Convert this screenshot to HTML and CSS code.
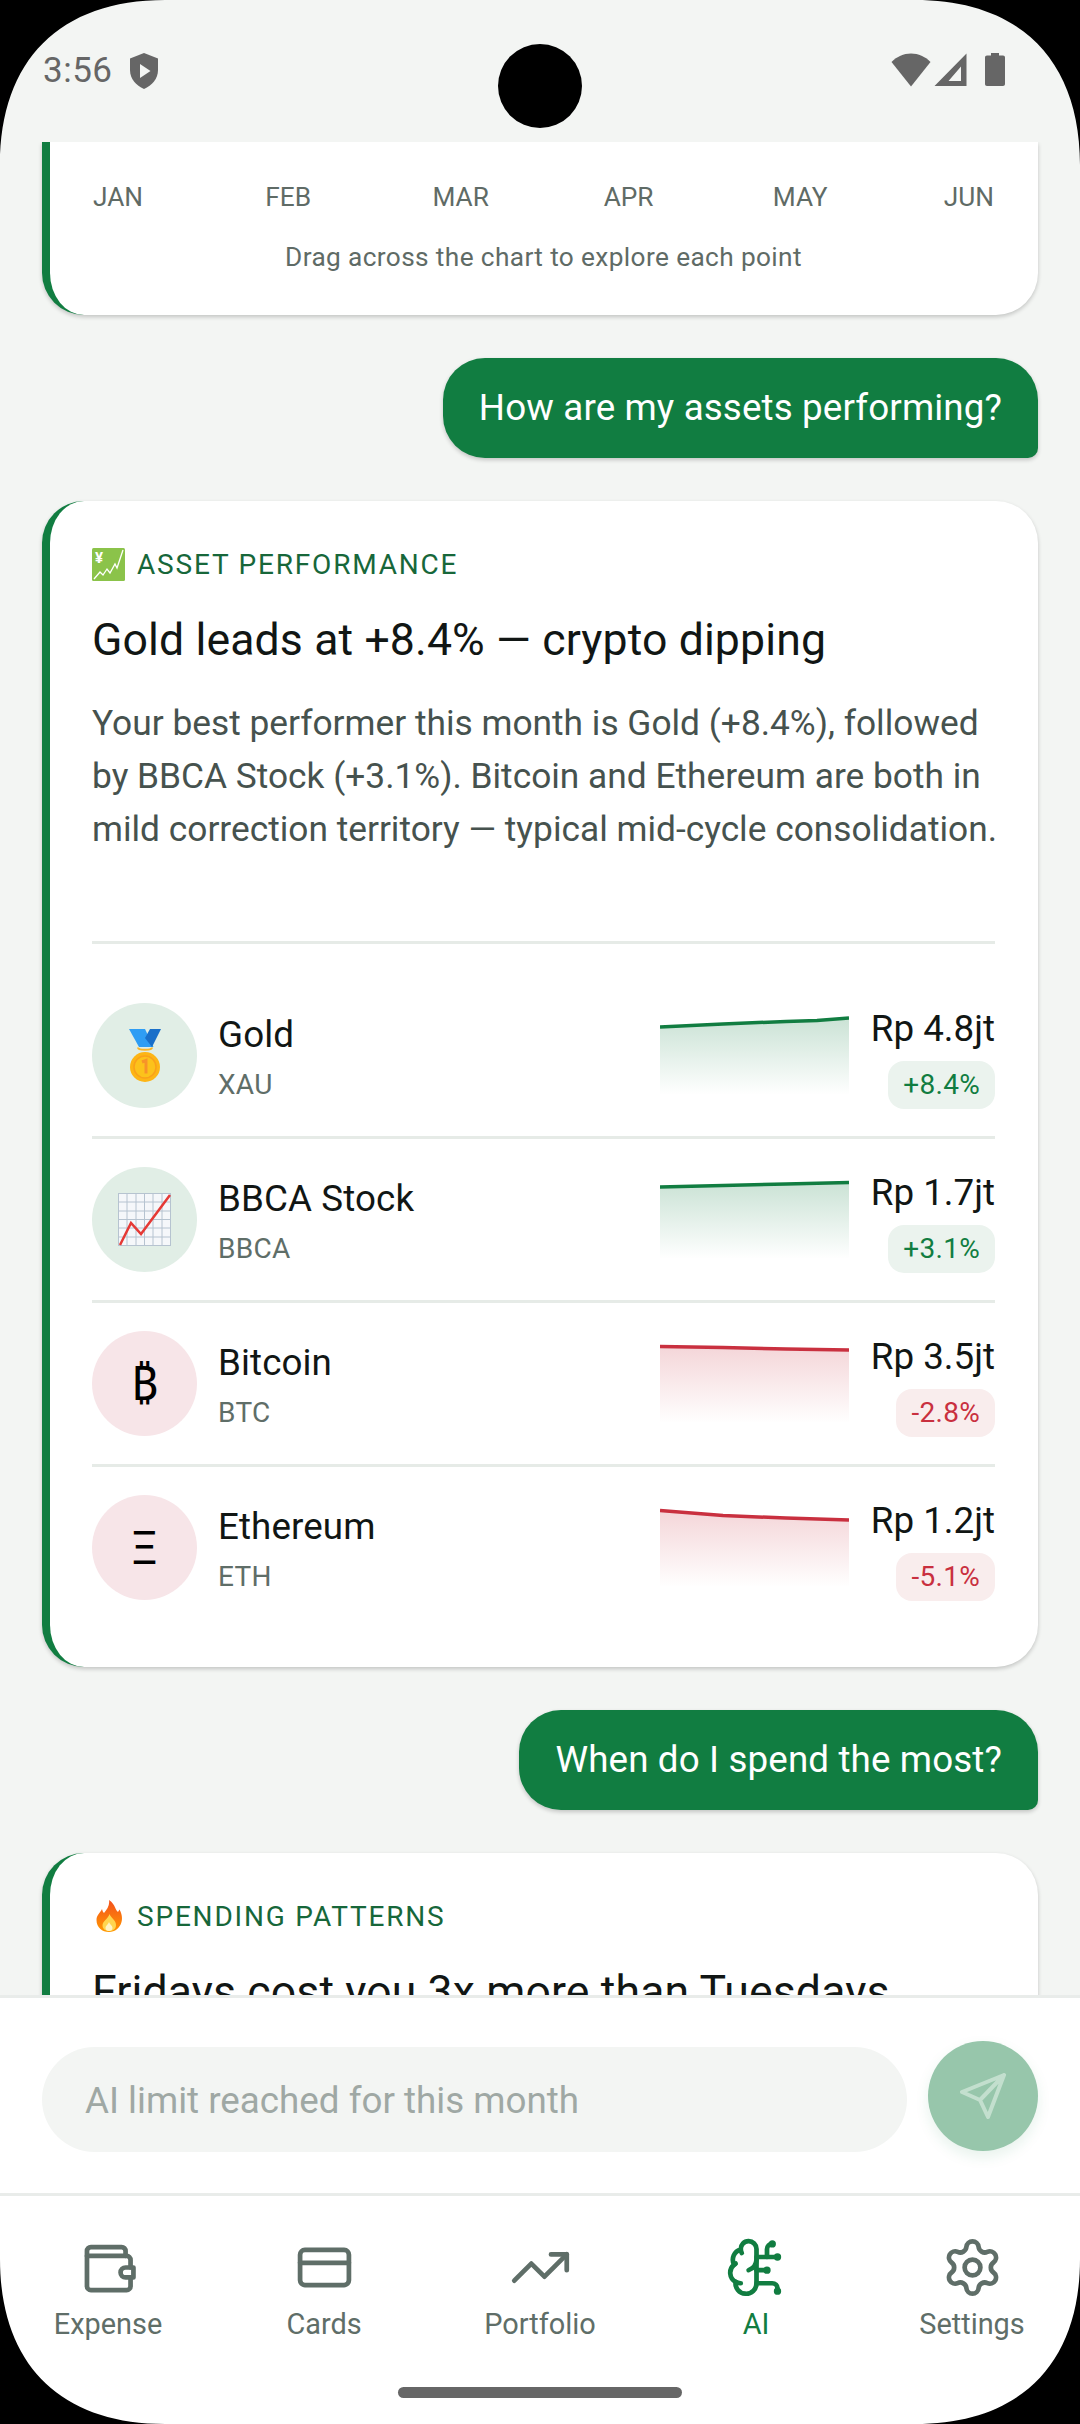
FILE: index.html
```html
<!DOCTYPE html>
<html lang="en">
    <head>
        <meta charset="UTF-8">
        <meta name="viewport" content="width=device-width, initial-scale=1.0">
        <link rel="stylesheet" href="styles.css">
        <title>AI Chat</title>
    </head>
    <body>
        <div class="screen">
            <header class="status">
                <div class="status-left">
                    <span class="clock">3:56</span>
                    <svg class="shield" viewBox="0 0 30 36"><path d="M15 0L29 5.500V17C29 26 23 32.500 15 36C7 32.500 1 26 1 17V5.500Z" fill="#666"/><path d="M11 11L21.500 18L11 25Z" fill="#f3f5f3"/></svg>
                </div>
                <div class="status-right">
                    <svg class="wifi" viewBox="0 0 40 34"><path d="M20 33.500L0.500 9C6 3.500 12.500 0.500 20 0.500C27.500 0.500 34 3.500 39.500 9Z" fill="#666"/></svg>
                    <svg class="signal" viewBox="0 0 33 33"><path d="M32.500 0.500V33H0.500ZM27 13.500L14.500 28H27Z" fill="#666" fill-rule="evenodd"/></svg>
                    <svg class="battery" viewBox="0 0 20 33"><path d="M6 0H14V2.500H18C19.200 2.500 20 3.300 20 4.500V31C20 32.200 19.200 33 18 33H2C0.800 33 0 32.200 0 31V4.500C0 3.300 0.800 2.500 2 2.500H6Z" fill="#666"/></svg>
                </div>
            </header>

            <main class="chat">
                <section class="card card-cut">
                    <div class="months">
                        <span>JAN</span><span>FEB</span><span>MAR</span><span>APR</span><span>MAY</span><span>JUN</span>
                    </div>
                    <p class="hint">Drag across the chart to explore each point</p>
                </section>

                <div class="bubble">How are my assets performing?</div>

                <section class="card">
                    <div class="label">
                        <svg class="emoji emoji-yen" viewBox="0 0 33 33">
                            <rect width="33" height="33" rx="1.500" fill="#8bc34a"/>
                            <text x="3" y="15" class="yen-mark">¥</text>
                            <path d="M2 31L8 24L11 27L15 21L18 25L23 16L25 20L31 2" fill="none" stroke="#fff" stroke-width="1.300"/>
                        </svg>
                        <span>ASSET PERFORMANCE</span>
                    </div>
                    <h2 class="title">Gold leads at +8.4% — crypto dipping</h2>
                    <p class="body-text">Your best performer this month is Gold (+8.4%), followed<br>by BBCA Stock (+3.1%). Bitcoin and Ethereum are both in<br>mild correction territory — typical mid-cycle consolidation.</p>

                    <div class="assets">
                        <div class="asset">
                            <div class="asset-icon up">
                                <svg class="emoji-medal" viewBox="0 0 32 53">
                                    <path d="M0 0H16L24.500 18H10Z" fill="#2f9df4"/>
                                    <path d="M21 0H32L23 18L16 9Z" fill="#1a6fc9"/>
                                    <path d="M9 18.500C9 21.500 23 21.500 23 18.500" fill="none" stroke="#f9b52a" stroke-width="2"/>
                                    <circle cx="16" cy="38" r="15" fill="#fdb515"/>
                                    <circle cx="16" cy="38" r="11" fill="#fcc21b" stroke="#f9a11b" stroke-width="1.500"/>
                                    <path d="M13 33L17 31.500V44.500" fill="none" stroke="#f79329" stroke-width="3"/>
                                </svg>
                            </div>
                            <div class="asset-info">
                                <div class="asset-name">Gold</div>
                                <div class="asset-code">XAU</div>
                            </div>
                            <svg class="spark" viewBox="0 0 189 79">
                                <defs><linearGradient id="fillGold" x1="0" y1="0" x2="0" y2="1"><stop offset="0" stop-color="#117d41" stop-opacity="0.22"/><stop offset="1" stop-color="#117d41" stop-opacity="0"/></linearGradient></defs>
                                <path d="M0 11L63 8L126 5.500L157 4.500L189 2V79H0Z" fill="url(#fillGold)"/>
                                <path d="M0 11L63 8L126 5.500L157 4.500L189 2" fill="none" stroke="#117d41" stroke-width="3.500"/>
                            </svg>
                            <div class="asset-value">
                                <div class="amount">Rp 4.8jt</div>
                                <span class="chip chip-up">+8.4%</span>
                            </div>
                        </div>

                        <div class="asset">
                            <div class="asset-icon up">
                                <svg class="emoji-chart" viewBox="0 0 53 53">
                                    <rect x="0.500" y="0.500" width="52" height="52" fill="#f5f7fa" stroke="#b6c3d0"/>
                                    <path d="M9 0V53M18 0V53M26.500 0V53M35 0V53M44 0V53M0 9H53M0 18H53M0 26.500H53M0 35H53M0 44H53" stroke="#b6c3d0" stroke-width="1"/>
                                    <path d="M2 52L13 30L23 41L52 2" fill="none" stroke="#e53935" stroke-width="2.500"/>
                                </svg>
                            </div>
                            <div class="asset-info">
                                <div class="asset-name">BBCA Stock</div>
                                <div class="asset-code">BBCA</div>
                            </div>
                            <svg class="spark" viewBox="0 0 189 79">
                                <defs><linearGradient id="fillBbca" x1="0" y1="0" x2="0" y2="1"><stop offset="0" stop-color="#117d41" stop-opacity="0.22"/><stop offset="1" stop-color="#117d41" stop-opacity="0"/></linearGradient></defs>
                                <path d="M0 7L63 5.500L126 4L189 2.500V79H0Z" fill="url(#fillBbca)"/>
                                <path d="M0 7L63 5.500L126 4L189 2.500" fill="none" stroke="#117d41" stroke-width="3.500"/>
                            </svg>
                            <div class="asset-value">
                                <div class="amount">Rp 1.7jt</div>
                                <span class="chip chip-up">+3.1%</span>
                            </div>
                        </div>

                        <div class="asset">
                            <div class="asset-icon down"><span class="coin">₿</span></div>
                            <div class="asset-info">
                                <div class="asset-name">Bitcoin</div>
                                <div class="asset-code">BTC</div>
                            </div>
                            <svg class="spark" viewBox="0 0 189 79">
                                <defs><linearGradient id="fillBtc" x1="0" y1="0" x2="0" y2="1"><stop offset="0" stop-color="#c9303f" stop-opacity="0.2"/><stop offset="1" stop-color="#c9303f" stop-opacity="0"/></linearGradient></defs>
                                <path d="M0 2.500L63 3.500L126 5L189 6V79H0Z" fill="url(#fillBtc)"/>
                                <path d="M0 2.500L63 3.500L126 5L189 6" fill="none" stroke="#c9303f" stroke-width="3.500"/>
                            </svg>
                            <div class="asset-value">
                                <div class="amount">Rp 3.5jt</div>
                                <span class="chip chip-down">-2.8%</span>
                            </div>
                        </div>

                        <div class="asset">
                            <div class="asset-icon down"><span class="coin">Ξ</span></div>
                            <div class="asset-info">
                                <div class="asset-name">Ethereum</div>
                                <div class="asset-code">ETH</div>
                            </div>
                            <svg class="spark" viewBox="0 0 189 79">
                                <defs><linearGradient id="fillEth" x1="0" y1="0" x2="0" y2="1"><stop offset="0" stop-color="#c9303f" stop-opacity="0.2"/><stop offset="1" stop-color="#c9303f" stop-opacity="0"/></linearGradient></defs>
                                <path d="M0 2.500L63 7.500L126 10L189 12V79H0Z" fill="url(#fillEth)"/>
                                <path d="M0 2.500L63 7.500L126 10L189 12" fill="none" stroke="#c9303f" stroke-width="3.500"/>
                            </svg>
                            <div class="asset-value">
                                <div class="amount">Rp 1.2jt</div>
                                <span class="chip chip-down">-5.1%</span>
                            </div>
                        </div>
                    </div>
                </section>

                <div class="bubble">When do I spend the most?</div>

                <section class="card">
                    <div class="label">
                        <svg class="emoji emoji-fire" viewBox="0 0 26 32">
                            <defs><linearGradient id="flame" x1="0" y1="0" x2="0" y2="1"><stop offset="0" stop-color="#f4511e"/><stop offset="1" stop-color="#ff9800"/></linearGradient></defs>
                            <path d="M13 0C20 5 19 10 22 12C23 10.500 23 10 23.500 9.500C26 14 26.500 18 25.500 22C24 28 19 32 13 32C6 32 0.500 27.500 0.500 20C0.500 15 4 13 6 9C6.500 11 7 12 8 13C11 9.500 14 5 13 0Z" fill="url(#flame)"/>
                            <path d="M13.500 14C15 18 20 20 20 25C20 29 17 31 13 31C9 31 6.500 28.500 6.500 25.500C6.500 21 12 19 13.500 14Z" fill="#ffd54f"/>
                            <path d="M13 22C14 25 16.500 25.500 16.500 28C16.500 30 15 31 13 31C11 31 9.500 30 9.500 28C9.500 25.500 12 25 13 22Z" fill="#fff3c4"/>
                        </svg>
                        <span>SPENDING PATTERNS</span>
                    </div>
                    <h2 class="title">Fridays cost you 3x more than Tuesdays</h2>
                </section>
            </main>

            <form class="composer">
                <div class="composer-input">AI limit reached for this month</div>
                <button class="send" type="button">
                    <svg viewBox="0 0 46 46" class="send-icon"><path d="M44 2L2 19L20 27L28 44ZM44 2L20 27" fill="none" stroke="#c3dfce" stroke-width="4" stroke-linejoin="round" stroke-linecap="round"/></svg>
                </button>
            </form>

            <nav class="nav">
                <div class="nav-items">
                    <a class="nav-item">
                        <svg class="nav-icon" viewBox="0 0 24 24"><path d="M18.500 7.600V5.700A1.500 1.500 0 0 0 17 4.200H5.300A1.500 1.500 0 0 0 3.800 5.700V19.100A1.500 1.500 0 0 0 5.300 20.600H18.900A1.500 1.500 0 0 0 20.400 19.100V15.800"/><path d="M3.800 7.600H18.900A1.500 1.500 0 0 1 20.400 9.100V12"/><path d="M18.500 12H21.500V15.800H18.500A1.900 1.900 0 0 1 18.500 12Z"/></svg>
                        <span>Expense</span>
                    </a>
                    <a class="nav-item">
                        <svg class="nav-icon" viewBox="0 0 24 24"><rect x="2.700" y="5.300" width="18.600" height="13.400" rx="1.800"/><path d="M2.700 10.200H21.300"/></svg>
                        <span>Cards</span>
                    </a>
                    <a class="nav-item">
                        <svg class="nav-icon" viewBox="0 0 24 24"><path d="M22 7L13.500 15.500L8.500 10.500L2 17"/><path d="M16 7H22V13"/></svg>
                        <span>Portfolio</span>
                    </a>
                    <a class="nav-item active">
                        <svg class="nav-icon" viewBox="0 0 24 24"><path d="M12 5a3 3 0 1 0-5.997.125 4 4 0 0 0-2.526 5.770 4 4 0 0 0 .556 6.588A4 4 0 1 0 12 18Z"/><path d="M9 13a4.500 4.500 0 0 0 3-4"/><path d="M6.003 5.125A3 3 0 0 0 6.401 6.500"/><path d="M3.477 10.896a4 4 0 0 1 .585-.396"/><path d="M6 18a4 4 0 0 1-1.967-.516"/><path d="M12 13h4"/><path d="M12 18h6a2 2 0 0 1 2 2v1"/><path d="M12 8h8"/><path d="M16 8V5a2 2 0 0 1 2-2"/><circle cx="16" cy="13" r=".5"/><circle cx="18" cy="3" r=".5"/><circle cx="20" cy="21" r=".5"/><circle cx="20" cy="8" r=".5"/></svg>
                        <span>AI</span>
                    </a>
                    <a class="nav-item">
                        <svg class="nav-icon" viewBox="0 0 24 24"><path d="M9.671 4.136a2.340 2.340 0 0 1 4.659 0 2.340 2.340 0 0 0 3.319 1.915 2.340 2.340 0 0 1 2.330 4.033 2.340 2.340 0 0 0 0 3.831 2.340 2.340 0 0 1-2.330 4.033 2.340 2.340 0 0 0-3.319 1.915 2.340 2.340 0 0 1-4.659 0 2.340 2.340 0 0 0-3.320-1.915 2.340 2.340 0 0 1-2.330-4.033 2.340 2.340 0 0 0 0-3.831A2.340 2.340 0 0 1 6.350 6.051a2.340 2.340 0 0 0 3.319-1.915"/><circle cx="12" cy="12" r="3"/></svg>
                        <span>Settings</span>
                    </a>
                </div>
                <div class="home-bar"></div>
            </nav>

            <!-- black display corners and the camera sit over everything -->
            <div class="camera"></div>
            <svg class="corner corner-tl" viewBox="0 0 165 165"><path d="M0 0H165C60 0 0 60 0 165Z"/></svg>
            <svg class="corner corner-tr" viewBox="0 0 165 165"><path d="M0 0H165C60 0 0 60 0 165Z"/></svg>
            <svg class="corner corner-bl" viewBox="0 0 165 165"><path d="M0 0H165C60 0 0 60 0 165Z"/></svg>
            <svg class="corner corner-br" viewBox="0 0 165 165"><path d="M0 0H165C60 0 0 60 0 165Z"/></svg>
        </div>
    </body>
</html>
```

FILE: styles.css
```css
* {
    box-sizing: border-box;
}

body {
    margin: 0;
    background: #000;
    font-family: Roboto, "Noto Sans", sans-serif;
}

.screen {
    position: relative;
    width: 1080px;
    height: 2424px;
    display: flex;
    flex-direction: column;
    background: #f3f5f3;
    overflow: hidden;
}

/* status bar */
.status {
    height: 142px;
    flex-shrink: 0;
    display: flex;
    justify-content: space-between;
    padding: 53px 75px 0 43px;
}

.status-left {
    display: flex;
    align-items: flex-start;
    gap: 16px;
}

.clock {
    font-size: 35px;
    line-height: 36px;
    letter-spacing: 0.5px;
    color: #666;
}

.shield {
    width: 30px;
    height: 36px;
}

.status-right {
    display: flex;
    align-items: flex-start;
    gap: 3px;
}

.wifi {
    width: 40px;
    height: 34px;
}

.signal {
    width: 33px;
    height: 33px;
}

.battery {
    width: 20px;
    height: 33px;
    margin-left: 15px;
}

/* chat */
.chat {
    flex: 1;
    min-height: 0;
    overflow: hidden;
    display: flex;
    flex-direction: column;
    gap: 43px;
    padding: 0 42px;
}

.card {
    flex-shrink: 0;
    background: #fff;
    border-left: 8px solid #117d41;
    border-radius: 42px;
    padding: 43px 43px 36px 42px;
    box-shadow: 0 2px 4px rgba(0, 0, 0, 0.2);
}

.card-cut {
    border-radius: 0 0 42px 42px;
    padding-top: 37px;
    padding-bottom: 40px;
}

.months {
    display: flex;
    justify-content: space-between;
    font-size: 26.250px;
    line-height: 36px;
    color: #5f6b66;
}

.months span {
    width: 52px;
    text-align: center;
}

.hint {
    margin: 24px 0 0;
    font-size: 26.250px;
    line-height: 36px;
    letter-spacing: 0.37px;
    color: #5f6b66;
    text-align: center;
}

.bubble {
    flex-shrink: 0;
    align-self: flex-end;
    padding: 26px 36px;
    font-size: 36.750px;
    line-height: 48px;
    letter-spacing: 0.13px;
    color: #fff;
    background: #117d41;
    border-radius: 42px 42px 10px 42px;
    box-shadow: 0 2px 4px rgba(0, 0, 0, 0.2);
}

.label {
    display: flex;
    align-items: center;
    gap: 12px;
    height: 40px;
    font-size: 28px;
    letter-spacing: 1.8px;
    color: #17673a;
}

.emoji {
    flex-shrink: 0;
}

.emoji-yen {
    width: 33px;
    height: 33px;
}

.yen-mark {
    font-family: Roboto, sans-serif;
    font-size: 15px;
    font-weight: 700;
    fill: #fff;
}

.emoji-fire {
    width: 26px;
    height: 32px;
    margin: 0 3px 0 4px;
}

.title {
    margin: 26px 0 0;
    font-size: 44.600px;
    font-weight: 400;
    line-height: 60px;
    letter-spacing: 0.12px;
    color: #111614;
    white-space: nowrap;
}

.body-text {
    margin: 27px 0 0;
    font-size: 35.300px;
    line-height: 53px;
    color: #46524e;
    white-space: nowrap;
}

.assets {
    margin-top: 85px;
    padding-top: 31px;
    border-top: 3px solid #e6ebe7;
}

.asset {
    display: flex;
    align-items: center;
    height: 164px;
    border-bottom: 3px solid #e6ebe7;
}

.asset:last-child {
    border-bottom-color: transparent;
}

.asset-icon {
    width: 105px;
    height: 105px;
    flex-shrink: 0;
    display: flex;
    align-items: center;
    justify-content: center;
    border-radius: 50%;
}

.asset-icon.up {
    background: #e1eee6;
}

.asset-icon.down {
    background: #f7e5e8;
}

.emoji-medal {
    width: 32px;
    height: 53px;
}

.emoji-chart {
    width: 53px;
    height: 53px;
}

.coin {
    font-size: 47px;
    line-height: 1;
    color: #000;
}

.asset-info {
    flex: 1;
    margin-left: 21px;
    padding-top: 4px;
}

.asset-name {
    font-size: 36.750px;
    line-height: 48px;
    letter-spacing: 0.1px;
    color: #111614;
}

.asset-code {
    margin-top: 7px;
    font-size: 28px;
    line-height: 38px;
    letter-spacing: 0.3px;
    color: #5f6e68;
}

.spark {
    width: 189px;
    height: 79px;
    flex-shrink: 0;
}

.asset-value {
    width: 146px;
    display: flex;
    flex-direction: column;
    align-items: flex-end;
    gap: 8px;
    padding-top: 3px;
}

.amount {
    font-size: 36.750px;
    line-height: 48px;
    white-space: nowrap;
    color: #111614;
}

.chip {
    padding: 0 15px;
    font-size: 28px;
    line-height: 48px;
    letter-spacing: 0.3px;
    border-radius: 16px;
}

.chip-up {
    color: #117d41;
    background: #ebf3ee;
}

.chip-down {
    color: #c9303f;
    background: #f9eded;
}

/* input */
.composer {
    height: 198px;
    flex-shrink: 0;
    display: flex;
    align-items: flex-end;
    justify-content: space-between;
    margin: 0;
    padding: 0 42px 41px;
    background: #fff;
    border-top: 3px solid #e9ecea;
}

.composer-input {
    width: 865px;
    height: 105px;
    padding-left: 43px;
    font-size: 36.750px;
    line-height: 107px;
    color: #9fa8a4;
    background: #f3f5f3;
    border-radius: 53px;
}

.send {
    width: 110px;
    height: 110px;
    margin-bottom: 1px;
    padding: 0;
    border: none;
    border-radius: 50%;
    display: flex;
    align-items: center;
    justify-content: center;
    background: #97c6ab;
    box-shadow: 0 6px 14px rgba(17, 125, 65, 0.1);
}

.send-icon {
    width: 46px;
    height: 46px;
}

/* bottom nav */
.nav {
    height: 231px;
    flex-shrink: 0;
    display: flex;
    flex-direction: column;
    align-items: center;
    padding-top: 40px;
    background: #fff;
    border-top: 3px solid #e9ecea;
}

.nav-items {
    width: 100%;
    display: flex;
}

.nav-item {
    flex: 1;
    display: flex;
    flex-direction: column;
    align-items: center;
    gap: 6px;
    font-size: 28.900px;
    line-height: 38px;
    color: #5f6e68;
}

.nav-item.active {
    color: #117d41;
}

.nav-icon {
    width: 63px;
    height: 63px;
    fill: none;
    stroke: currentColor;
    stroke-width: 1.800;
    stroke-linecap: round;
    stroke-linejoin: round;
}

.home-bar {
    width: 284px;
    height: 11px;
    margin-top: 44px;
    background: #666;
    border-radius: 6px;
}

/* overlays */
.camera {
    position: absolute;
    top: 44px;
    left: 498px;
    width: 84px;
    height: 84px;
    background: #000;
    border-radius: 50%;
}

.corner {
    position: absolute;
    width: 165px;
    height: 165px;
    fill: #000;
}

.corner-tl {
    top: 0;
    left: 0;
}

.corner-tr {
    top: 0;
    right: 0;
    transform: scaleX(-1);
}

.corner-bl {
    bottom: 0;
    left: 0;
    transform: scaleY(-1);
}

.corner-br {
    bottom: 0;
    right: 0;
    transform: scale(-1, -1);
}
```
